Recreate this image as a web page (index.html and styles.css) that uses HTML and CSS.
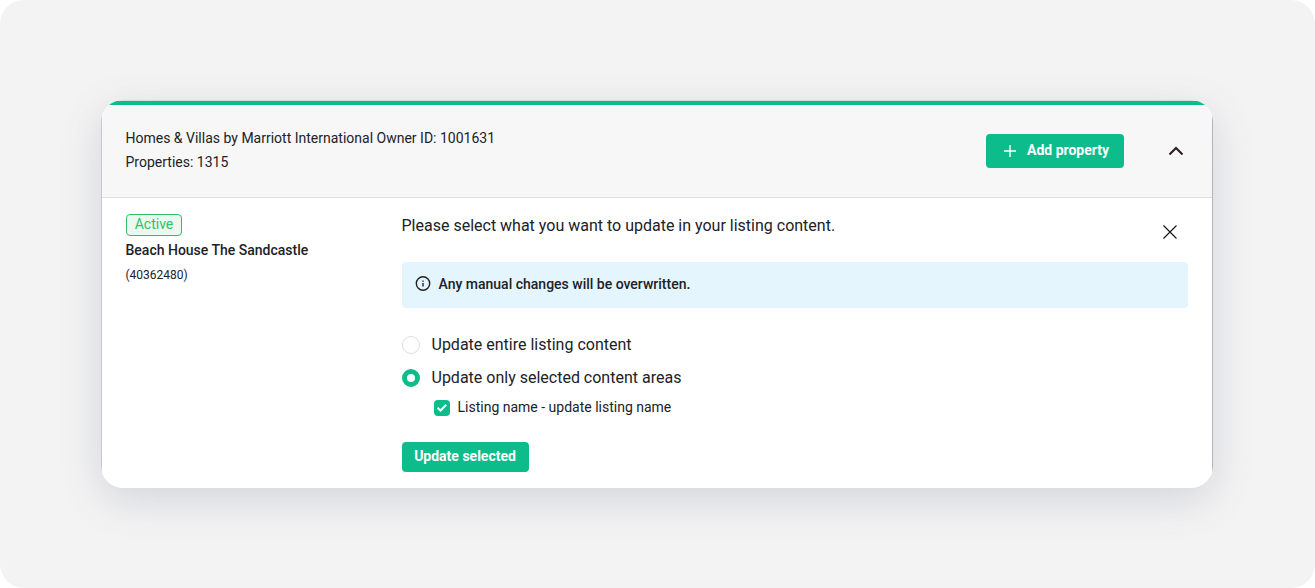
FILE: index.html
```
<!DOCTYPE html>
<html lang="en">

<head>
    <meta charset="UTF-8">
    <title>Update listing content</title>

    <link rel="stylesheet" href="styles.css">
</head>

<body>
    <div class="page">
        <div class="card">
            <div class="panel">
                <div class="card-header">
                    <div class="owner">
                        <div>Homes &amp; Villas by Marriott International Owner ID: 1001631</div>
                        <div>Properties: 1315</div>
                    </div>
                    <button class="btn btn-add" type="button">
                        <svg width="12" height="12" viewBox="0 0 12 12" fill="none" stroke="currentColor" stroke-width="1.4">
                            <path d="M6 0v12M0 6h12" />
                        </svg>
                        <span>Add property</span>
                    </button>
                    <svg class="chevron" width="16" height="10" viewBox="0 0 16 10" fill="none" stroke="#261c22" stroke-width="2">
                        <path d="M1.5 8.5L8 2l6.5 6.5" />
                    </svg>
                </div>
                <div class="card-body">
                    <div class="property">
                        <span class="status">Active</span>
                        <div class="property-name">Beach House The Sandcastle</div>
                        <div class="property-id">(40362480)</div>
                    </div>
                    <form class="update">
                        <div class="update-title">
                            <span>Please select what you want to update in your listing content.</span>
                            <svg class="close" width="14" height="14" viewBox="0 0 14 14" fill="none" stroke="#111" stroke-width="1.1">
                                <path d="M.5.5l13 13M13.5.5l-13 13" />
                            </svg>
                        </div>
                        <div class="notice">
                            <svg width="16" height="16" viewBox="0 0 16 16" fill="none" stroke="#222" stroke-width="1.4">
                                <circle cx="8" cy="7.5" r="6.7" />
                                <path d="M8 7v3.500M8 4.500v1.300" />
                            </svg>
                            <span>Any manual changes will be overwritten.</span>
                        </div>
                        <label class="option">
                            <input class="radio" type="radio" name="scope">
                            <span>Update entire listing content</span>
                        </label>
                        <label class="option">
                            <input class="radio" type="radio" name="scope" checked>
                            <span>Update only selected content areas</span>
                        </label>
                        <div class="area">
                            <span class="checkbox">
                                <svg width="16" height="16" viewBox="0 0 16 16" fill="none" stroke="#fff" stroke-width="2">
                                    <path d="M3.5 7.8l3 2.700 5.700-5.700" />
                                </svg>
                            </span>
                            <span>Listing name - update listing name</span>
                        </div>
                        <button class="btn btn-update" type="button"><span>Update selected</span></button>
                    </form>
                </div>
            </div>
        </div>
    </div>
</body>

</html>
```
FILE: styles.css
```
* {
    box-sizing: border-box;
    font-family: Roboto, Arial, sans-serif;
}

body {
    margin: 0;
    background-color: #fff;
    color: #212127;
}

svg {
    display: block;
    flex: none;
}

.page {
    height: 588px;
    padding: 100px 102px 100px 101px;
    background-color: #f3f3f3;
    border-radius: 24px;
}

.card {
    height: 388px;
    overflow: hidden;
    border-radius: 22px;
    box-shadow: 0 12px 40px rgba(90, 95, 130, 0.2);
}

/* side lines stay straight and get cut off by the rounded card */
.panel {
    height: 100%;
    background-color: #fff;
    border-top: 1px solid #d4dcd9;
    border-left: 1px solid #c9c9c9;
    border-right: 1px solid #b4b4b4;
}

.card-header {
    display: flex;
    align-items: center;
    height: 97px;
    padding: 0 28px 0 23.5px;
    background-color: #f7f7f7;
    border-top: 4px solid #0cbc8b;
    border-bottom: 1px solid #dedede;
}

.owner {
    flex: 1;
    padding-bottom: 2px;
    font-size: 14px;
    line-height: 24px;
}

.btn {
    display: flex;
    align-items: center;
    border: none;
    border-radius: 4px;
    background-color: #0cbc8b;
    color: #fff;
    font-size: 14px;
    font-weight: 700;
    line-height: 20px;
}

.btn > span {
    padding-bottom: 2px;
}

.btn-add {
    gap: 11px;
    width: 138px;
    height: 34px;
    padding: 0 0 0 18px;
}

.chevron {
    margin-left: 44px;
}

.card-body {
    display: flex;
    padding: 16px 24px 0 23.5px;
}

.property {
    width: 276px;
}

.status {
    display: block;
    width: 56px;
    height: 22px;
    margin-left: 0.5px;
    border: 1px solid #2dc26b;
    border-radius: 4px;
    background-color: #eaf8f0;
    color: #2dc26b;
    font-size: 14px;
    line-height: 19px;
    text-align: center;
}

.property-name {
    margin-top: 2px;
    font-size: 14px;
    font-weight: 500;
    line-height: 24px;
}

.property-id {
    padding-top: 1px;
    font-size: 12px;
    line-height: 24px;
}

.update {
    flex: 1;
}

.update-title {
    display: flex;
    justify-content: space-between;
    padding-right: 11px;
    font-size: 16px;
    line-height: 24px;
}

.close {
    margin-top: 11px;
}

.notice {
    display: flex;
    align-items: center;
    gap: 8px;
    height: 46px;
    margin: 23px 0 25px 0.5px;
    padding: 0 12.5px 2px;
    border-radius: 4px;
    background-color: #e4f5fd;
    font-size: 14px;
    font-weight: 500;
}

.option {
    display: flex;
    align-items: center;
    gap: 11.5px;
    height: 24px;
    margin: 0 0 9px 0.5px;
    font-size: 16px;
    line-height: 24px;
}

.radio {
    flex: none;
    width: 18px;
    height: 18px;
    margin: 0;
    appearance: none;
    border: 1px solid #dedede;
    border-radius: 50%;
    background-color: #fff;
}

.option > .radio {
    margin-bottom: 1px;
    margin-top: 1px;
}

.radio:checked {
    border: 5px solid #0cbc8b;
}

.area {
    display: flex;
    align-items: center;
    gap: 7.5px;
    height: 20px;
    margin: -2px 0 0 32.5px;
    font-size: 14px;
}

.checkbox {
    margin-top: 2px;
    border-radius: 4px;
    background-color: #0cbc8b;
}

.btn-update {
    justify-content: center;
    width: 127px;
    height: 30px;
    margin: 25px 0 0 0.5px;
    padding: 0 1px 0 0;
}
```
